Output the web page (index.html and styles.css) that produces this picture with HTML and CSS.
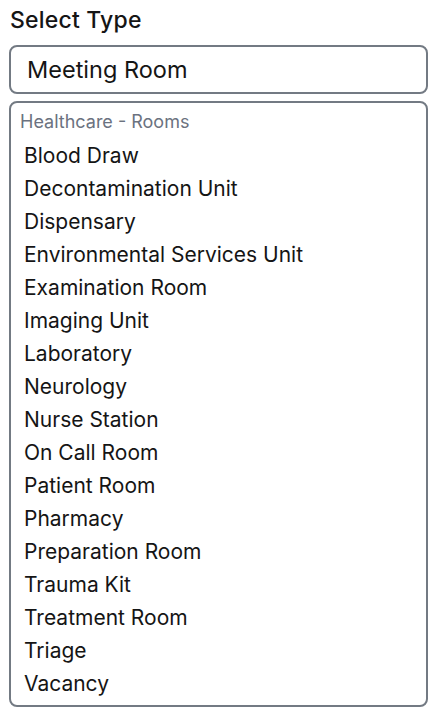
FILE: index.html
```html
<!DOCTYPE html>
<html lang="en">
<head>
<meta charset="utf-8">
<title>Select Type</title>
<link rel="stylesheet" href="styles.css">
</head>
<body>
<div class="field">
  <label class="field-label" for="type">Select Type</label>
  <div class="input" id="type">Meeting Room</div>
  <div class="listbox" role="listbox">
    <div class="group-label">Healthcare - Rooms</div>
    <div class="option">Blood Draw</div>
    <div class="option">Decontamination Unit</div>
    <div class="option">Dispensary</div>
    <div class="option">Environmental Services Unit</div>
    <div class="option">Examination Room</div>
    <div class="option">Imaging Unit</div>
    <div class="option">Laboratory</div>
    <div class="option">Neurology</div>
    <div class="option">Nurse Station</div>
    <div class="option">On Call Room</div>
    <div class="option">Patient Room</div>
    <div class="option">Pharmacy</div>
    <div class="option">Preparation Room</div>
    <div class="option">Trauma Kit</div>
    <div class="option">Treatment Room</div>
    <div class="option">Triage</div>
    <div class="option">Vacancy</div>
  </div>
</div>
</body>
</html>
```
FILE: styles.css
```css
html, body {
  margin: 0;
  padding: 0;
  background: #ffffff;
}
body {
  font-family: Inter, "Noto Sans", sans-serif;
  color: #151515;
}
.field {
  display: flex;
  flex-direction: column;
  padding: 6px 10px 0 9px;
}
.field-label {
  font-size: 23px;
  font-weight: 500;
  letter-spacing: 0.2px;
  line-height: 28px;
  padding-left: 1px;
  margin-bottom: 11px;
}
.input {
  height: 45px;
  border: 2px solid #737a83;
  border-radius: 8px;
  font-size: 23.5px;
  line-height: 45px;
  padding-left: 16px;
  margin-bottom: 7px;
}
.listbox {
  height: 596px;
  border: 2px solid #737a83;
  border-radius: 8px;
  padding: 6px 0 0 9px;
  overflow: hidden;
}
.group-label {
  font-size: 18px;
  color: #6b7280;
  line-height: 26px;
  margin-bottom: 4px;
}
.option {
  font-size: 21px;
  line-height: 33px;
  padding-left: 4px;
}
```
